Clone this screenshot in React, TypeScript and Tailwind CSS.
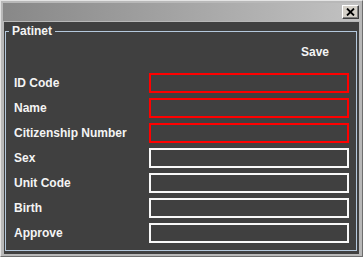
const FIELDS = [
  { label: 'ID Code', required: true },
  { label: 'Name', required: true },
  { label: 'Citizenship Number', required: true },
  { label: 'Sex', required: false },
  { label: 'Unit Code', required: false },
  { label: 'Birth', required: false },
  { label: 'Approve', required: false },
];

function CloseButton() {
  return (
    <button className="flex h-[14px] w-[17px] items-center justify-center border border-t-white border-l-white border-r-[#404040] border-b-[#404040] bg-[#d4d0c8] shadow-[inset_-1px_-1px_0_#808080]">
      <svg width="9" height="8" viewBox="0 0 9 8">
        <path d="M1 0.5 L8 7.5 M8 0.5 L1 7.5" stroke="#000" strokeWidth="1.8" />
      </svg>
    </button>
  );
}

export default function App() {
  return (
    <div
      className="flex h-[257px] w-[363px] flex-col border border-t-[#e4e4e4] border-l-[#e4e4e4] border-r-[#6e6e6e] border-b-[#6e6e6e] bg-[#b8b8b8] p-[2px]"
      style={{ fontFamily: '"Liberation Sans", Arial, sans-serif' }}
    >
      <div className="flex h-[18px] items-start justify-end bg-gradient-to-r from-[#888888] to-[#c2c2c2] pt-[2px] pr-[1px]">
        <CloseButton />
      </div>

      <div className="mx-[1px] mt-[1px] flex flex-1 flex-col bg-[#404040]">
        <fieldset className="mt-[2px] mr-[2px] mb-[3px] ml-[1px] flex-1 border border-[#b4c8dc] px-0 pb-0">
          <legend className="ml-[3px] px-[3px] text-[12px] leading-[14px] font-bold text-[#f4f4f4]">Patinet</legend>

          <div className="mt-[7px] flex justify-end pr-[27px] text-[12px] leading-[14px] font-bold text-[#f4f4f4]">
            Save
          </div>

          <div className="mt-[14px] flex flex-col gap-[5px] pl-[8px]">
            {FIELDS.map((f) => (
              <div key={f.label} className="flex h-[20px] items-center">
                <span className="w-[135px] text-[12px] leading-[14px] font-bold text-[#f4f4f4]">{f.label}</span>
                <div
                  className={
                    f.required
                      ? 'h-[20px] w-[200px] border-2 border-[#ff0000]'
                      : 'h-[20px] w-[200px] border-2 border-[#f8f8f8]'
                  }
                />
              </div>
            ))}
          </div>
        </fieldset>
      </div>
    </div>
  );
}
